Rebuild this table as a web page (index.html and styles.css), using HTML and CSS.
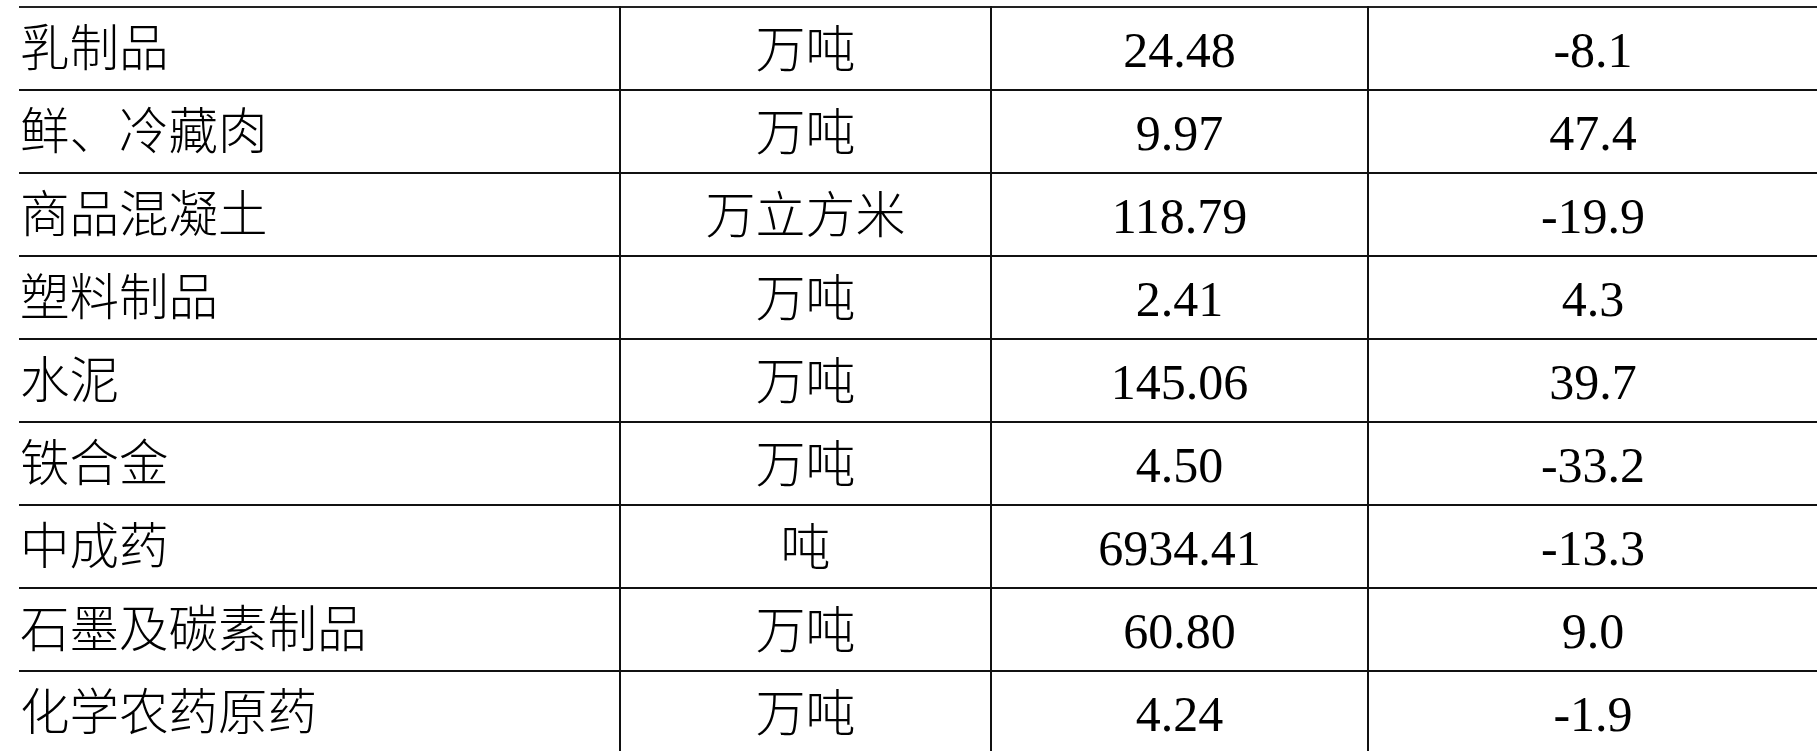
FILE: index.html
```html
<!DOCTYPE html>
<html lang="zh-CN">
<head>
<meta charset="utf-8">
<title>主要工业产品产量</title>
<link rel="stylesheet" href="styles.css">
</head>
<body>
<table class="data">
  <colgroup>
    <col class="c-name">
    <col class="c-unit">
    <col class="c-val">
    <col class="c-rate">
  </colgroup>
  <tbody>
    <tr><td class="name">乳制品</td><td>万吨</td><td>24.48</td><td>-8.1</td></tr>
    <tr><td class="name">鲜、冷藏肉</td><td>万吨</td><td>9.97</td><td>47.4</td></tr>
    <tr><td class="name">商品混凝土</td><td>万立方米</td><td>118.79</td><td>-19.9</td></tr>
    <tr><td class="name">塑料制品</td><td>万吨</td><td>2.41</td><td>4.3</td></tr>
    <tr><td class="name">水泥</td><td>万吨</td><td>145.06</td><td>39.7</td></tr>
    <tr><td class="name">铁合金</td><td>万吨</td><td>4.50</td><td>-33.2</td></tr>
    <tr><td class="name">中成药</td><td>吨</td><td>6934.41</td><td>-13.3</td></tr>
    <tr><td class="name">石墨及碳素制品</td><td>万吨</td><td>60.80</td><td>9.0</td></tr>
    <tr class="last"><td class="name">化学农药原药</td><td>万吨</td><td>4.24</td><td>-1.9</td></tr>
  </tbody>
</table>
</body>
</html>
```
FILE: styles.css
```css
html, body {
  margin: 0;
  padding: 0;
  background: #ffffff;
}

body {
  padding: 6px 0 0 19px;
  font-family: "Liberation Serif", "Noto Sans CJK SC", serif;
  color: #000;
}

.data {
  border-collapse: collapse;
  table-layout: fixed;
  width: 1798px;
  border-top: 2px solid #222;
}

.c-name { width: 601px; }
.c-unit { width: 371px; }
.c-val  { width: 377px; }
.c-rate { width: 449px; }

.data td {
  height: 79px;
  padding: 2px 0 0 0;
  border-bottom: 2px solid #111;
  border-left: 2px solid #111;
  text-align: center;
  vertical-align: middle;
  font-size: 50px;
  line-height: 1;
  font-weight: 300;
  white-space: nowrap;
}

.data td.name {
  border-left: none;
  text-align: left;
  padding-left: 1px;
  font-size: 49.5px;
}

.data tr.last td {
  border-bottom: 2px solid #aaa;
}
```
